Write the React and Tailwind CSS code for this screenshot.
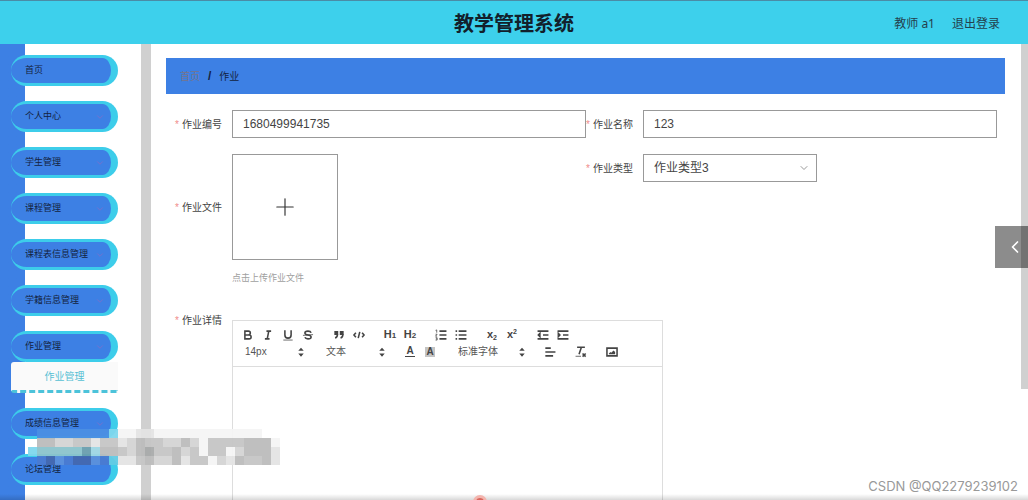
import { ChevronDown, ChevronLeft, Plus } from 'lucide-react'

const menus = [
  { title: '首页' },
  { title: '个人中心', arrow: true },
  { title: '学生管理', arrow: true },
  { title: '课程管理', arrow: true },
  { title: '课程表信息管理', arrow: true },
  { title: '学籍信息管理', arrow: true },
  { title: '作业管理', arrow: true, children: ['作业管理'] },
  { title: '成绩信息管理', arrow: true },
  { title: '论坛管理' },
  { title: '' },
]

// 9px tiles, one string per row: index in the palette, "." is empty
const tileColors = {
  a: '#a9abab', b: '#bcbcbc', c: '#c6c6c6', d: '#d4d4d4', e: '#e4e4e4', f: '#f5f5f5',
  g: '#8cc3cc', h: '#6a9fae', i: '#9fd6e3', j: '#4a7bd2', k: '#4468b0', l: '#5c91dc',
  m: '#7fd7ee', n: '#4b8fe3', o: '#62cbe4',
}
const tileRows = [
  '.nnnnnnnnmffeeffffffffffff..',
  '.bbddcceccedbccddbdfccccbbbf',
  'mggggghibbcdbaccbdcfccfdbbbe',
  '.jkljkkljoeecbddbeccfdebccbe',
]

function Icon({ children }) {
  return (
    <svg viewBox="0 0 18 18" className="size-[14px] fill-none stroke-[#444] stroke-2" aria-hidden="true">
      {children}
    </svg>
  )
}

function ToolButton({ label, children }) {
  return (
    <button
      type="button"
      aria-label={label}
      className="flex h-[17px] w-5 items-center justify-center text-[11px] leading-none font-semibold text-[#444]"
    >
      {children}
    </button>
  )
}

function Picker({ label, value, className }) {
  return (
    <div className={`relative ${className}`}>
      <select
        aria-label={label}
        className="block h-[17px] w-full appearance-none bg-transparent pl-[7px] text-[10px] text-[#555] outline-none"
      >
        <option>{value}</option>
      </select>
      <svg viewBox="0 0 18 18" className="pointer-events-none absolute top-[2px] right-0 size-[14px]" aria-hidden="true">
        <path d="M5.500 11h7L9 15ZM5.500 7.500h7L9 3.500Z" fill="#444" />
      </svg>
    </div>
  )
}

function Label({ htmlFor, children, className = 'h-7' }) {
  return (
    <label
      htmlFor={htmlFor}
      className={`flex w-[57px] shrink-0 items-center justify-end gap-[3px] pr-[10px] text-[10px] whitespace-nowrap text-[#444] ${className}`}
    >
      <span className="text-[#f08c8c]">*</span>
      {children}
    </label>
  )
}

function Toolbar() {
  return (
    <div className="border-b border-[#ddd] px-[5px] pt-[5px] pb-[6px]">
      <div className="flex gap-[11px]">
        <div className="flex">
          <ToolButton label="粗体">
            <Icon>
              <path d="M5,4H9.5A2.5,2.5,0,0,1,9.5,9H5V4ZM5,9h5.5A2.5,2.5,0,0,1,10.5,14H5V9Z" />
            </Icon>
          </ToolButton>
          <ToolButton label="斜体">
            <Icon>
              <path d="M7 4h6M5 14h6M8 14 10 4" />
            </Icon>
          </ToolButton>
          <ToolButton label="下划线">
            <Icon>
              <path d="M5,3V9a4,4,0,0,0,8,0V3" />
              <path d="M3 15.500h12" className="stroke-1" />
            </Icon>
          </ToolButton>
          <ToolButton label="删除线">
            <Icon>
              <path d="M13 6C12.500 4.700 11 4 9 4 6.700 4 5 5 5 6.500S6.500 8.700 9 9s4 1 4 2.500S11.300 14 9 14c-2 0-3.500-.7-4-2" />
              <path d="M2.500 9.500 15.500 8.500" className="stroke-1" />
            </Icon>
          </ToolButton>
        </div>
        <div className="flex">
          <ToolButton label="引用">
            <Icon>
              <path d="M4 5h3v3H4ZM11 5h3v3h-3Z" fill="#444" />
              <path d="M7,8c0,4-3,5-3,5M14,8c0,4-3,5-3,5" />
            </Icon>
          </ToolButton>
          <ToolButton label="代码">
            <Icon>
              <path d="M5 6 2.500 9 5 12M13 6 15.500 9 13 12M10 5 8 13" />
            </Icon>
          </ToolButton>
        </div>
        <div className="flex">
          <ToolButton label="标题1">
            H<span className="pt-[3px] text-[8px]">1</span>
          </ToolButton>
          <ToolButton label="标题2">
            H<span className="pt-[3px] text-[8px]">2</span>
          </ToolButton>
        </div>
        <div className="flex">
          <ToolButton label="有序列表">
            <Icon>
              <path d="M7 4h9M7 9h9M7 14h9" />
              <path d="M2 3 3.500 2.500V6M2 8h2L2 10.500h2M2 12.500h2v3H2M2.500 14H4" className="stroke-1" />
            </Icon>
          </ToolButton>
          <ToolButton label="无序列表">
            <Icon>
              <path d="M6 4h10M6 9h10M6 14h10M2 4h2M2 9h2M2 14h2" />
            </Icon>
          </ToolButton>
        </div>
        <div className="flex">
          <ToolButton label="下标">
            x<span className="pt-[6px] text-[7px]">2</span>
          </ToolButton>
          <ToolButton label="上标">
            x<span className="pb-[6px] text-[7px]">2</span>
          </ToolButton>
        </div>
        <div className="flex">
          <ToolButton label="减少缩进">
            <Icon>
              <path d="M2 4h14M2 14h14M9 9h7" />
              <path d="M5 7v4L3 9Z" fill="#444" />
            </Icon>
          </ToolButton>
          <ToolButton label="增加缩进">
            <Icon>
              <path d="M2 4h14M2 14h14M9 9h7" />
              <path d="M3 7v4l2-2Z" fill="#444" />
            </Icon>
          </ToolButton>
        </div>
      </div>
      <div className="flex gap-[11px]">
        <Picker label="字号" value="14px" className="w-[70px]" />
        <Picker label="段落" value="文本" className="w-[70px]" />
        <div className="flex">
          <ToolButton label="文字颜色">
            <span className="w-[10px] border-b border-[#444] text-center text-[10px]">A</span>
          </ToolButton>
          <ToolButton label="背景颜色">
            <span className="w-[10px] bg-[#c4c4c4] text-center text-[10px]">A</span>
          </ToolButton>
        </div>
        <Picker label="字体" value="标准字体" className="w-[78px]" />
        <ToolButton label="对齐">
          <Icon>
            <path d="M3 4h7M3 9h13M3 14h10" />
          </Icon>
        </ToolButton>
        <ToolButton label="清除格式">
          <Icon>
            <path d="M4 3h10M6.500 12 9.500 3M11 11l4 4M15 11l-4 4" />
            <path d="M2 14.500h7" className="stroke-1" />
          </Icon>
        </ToolButton>
        <ToolButton label="图片">
          <Icon>
            <path d="M2.500 4h13v10h-13Z" />
            <path d="M5 12v-1l2-2 1 1 3-3 2 2v3Z" fill="#444" stroke="none" />
          </Icon>
        </ToolButton>
      </div>
    </div>
  )
}

function Sidebar() {
  return (
    <aside className="flex w-[151px] shrink-0 overflow-hidden">
      <nav className="flex flex-1 flex-col gap-[15px] bg-linear-to-r from-[#3d80e4] from-[25px] to-white to-[25px] pt-[11px] pr-[23px] pl-[11px]">
        {menus.map((menu) => (
          <div key={menu.title} className="shrink-0">
            <button
              type="button"
              className="flex h-[31px] w-full items-center justify-between rounded-[18px] border-y-[3px] border-r-[7px] border-[#3dcdea] bg-[#3d80e4] pr-[6px] pl-[14px] text-[9px] whitespace-nowrap text-[#14233f]"
            >
              {menu.title}
              {menu.arrow && <ChevronDown className="size-[10px] shrink-0 text-[#7c6fcb]" />}
            </button>
            {menu.children?.map((child) => (
              <a
                key={child}
                href="#"
                className="flex h-[31px] items-center justify-center rounded-l-[3px] border-b-[3px] border-dashed border-[#4cc3da] bg-[#fafafa] text-[10px] text-[#56c0d4]"
              >
                {child}
              </a>
            ))}
          </div>
        ))}
      </nav>
      <div className="w-[10px] bg-[#d0d0d0]" />
    </aside>
  )
}

export default function App() {
  return (
    <div className="relative flex h-screen flex-col overflow-hidden bg-white font-['Liberation_Sans','Noto_Sans_CJK_SC',sans-serif]">
      <header className="grid h-11 shrink-0 grid-cols-[1fr_auto_1fr] items-center border-t border-[#4a8ca6] bg-[#3dd0ec] pt-[2px] font-['Noto_Sans','Noto_Sans_CJK_SC',sans-serif]">
        <h1 className="col-start-2 text-xl font-bold text-[#12202b]">教学管理系统</h1>
        <div className="flex justify-end gap-[17px] pr-[28px] text-xs text-[#24404d]">
          <span>教师 a1</span>
          <a href="#">退出登录</a>
        </div>
      </header>

      <div className="flex min-h-0 flex-1">
        <Sidebar />
        <main className="min-w-0 flex-1 overflow-hidden pt-[14px] pr-4 pl-[15px]">
          <nav className="flex h-9 items-center gap-2 bg-[#3d80e4] px-[14px] text-[10px] text-[#14233f]">
            <a href="#" className="text-[#76748c]">首页</a>
            <span className="text-xs font-bold">/</span>
            <span>作业</span>
          </nav>

          <form className="grid grid-cols-2 gap-y-4 pt-4 pr-2 pl-[9px]">
            <div className="flex">
              <Label htmlFor="number">作业编号</Label>
              <input
                id="number"
                defaultValue="1680499941735"
                className="h-7 min-w-0 flex-1 border border-[#999] px-[10px] text-xs text-[#444]"
              />
            </div>
            <div className="flex">
              <Label htmlFor="name">作业名称</Label>
              <input
                id="name"
                defaultValue="123"
                className="h-7 min-w-0 flex-1 border border-[#999] px-[10px] text-xs text-[#444]"
              />
            </div>

            <div className="flex">
              <Label htmlFor="file" className="h-[106px]">作业文件</Label>
              <div>
                <button
                  id="file"
                  type="button"
                  className="flex size-[106px] items-center justify-center border border-[#999]"
                >
                  <Plus className="size-7 text-[#333]" strokeWidth={1} />
                </button>
                <p className="pt-2 pb-[2px] text-[9px] leading-[20px] text-[#a0a0a0]">点击上传作业文件</p>
              </div>
            </div>
            <div className="flex">
              <Label htmlFor="type">作业类型</Label>
              <div className="relative h-7 w-[174px]">
                <select
                  id="type"
                  className="h-7 w-full appearance-none border border-[#999] bg-white px-[10px] text-xs text-[#444]"
                >
                  <option>作业类型3</option>
                </select>
                <ChevronDown className="pointer-events-none absolute top-2 right-[7px] size-3 text-[#999]" strokeWidth={2} />
              </div>
            </div>

            <div className="col-span-2 flex">
              <Label htmlFor="detail">作业详情</Label>
              <div className="mt-[14px] w-[431px] border border-[#ddd]">
                <Toolbar />
                <textarea id="detail" className="block h-[240px] w-full resize-none p-3 text-xs outline-none" />
              </div>
            </div>
          </form>
        </main>
        <div className="h-[345px] w-[7px] shrink-0 bg-[#d0d0d0]" />
      </div>

      <button
        type="button"
        aria-label="展开"
        className="absolute top-[226px] right-0 flex h-[42px] w-[33px] items-center justify-end bg-black/45 pr-[3px] text-white"
      >
        <ChevronLeft className="size-[20px]" strokeWidth={2} />
      </button>

      <svg viewBox="0 0 252 36" className="pointer-events-none absolute top-[429px] left-[28px] h-[36px] w-[252px] opacity-95" aria-hidden="true">
        {tileRows.map((row, y) =>
          [...row].map((tile, x) =>
            tileColors[tile] ? (
              <rect key={`${x}-${y}`} x={x * 9} y={y * 9} width="9" height="9" fill={tileColors[tile]} />
            ) : null
          )
        )}
      </svg>

      <p className="absolute right-[10px] bottom-[4px] font-['Inter',sans-serif] text-[13px] text-[#999]">CSDN @QQ2279239102</p>
      <div className="pointer-events-none absolute inset-x-0 bottom-0 h-[6px] bg-linear-to-b from-transparent to-black/15" />
      <div className="absolute -bottom-[9px] left-[473px] size-[14px] rounded-full border-[3px] border-[#f3b5ae] bg-[#d9655c]" />
    </div>
  )
}
